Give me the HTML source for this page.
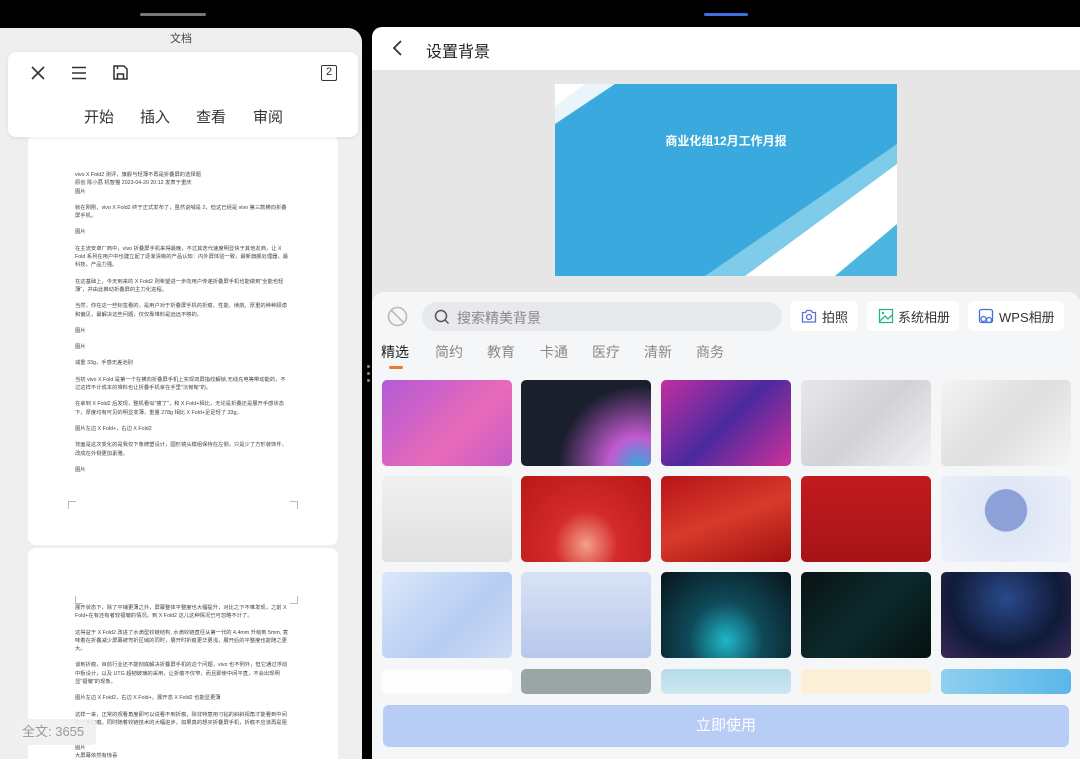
<!DOCTYPE html>
<html><head><meta charset="utf-8"><style>
*{margin:0;padding:0;box-sizing:border-box}
body{width:1080px;height:759px;overflow:hidden;background:#000;font-family:"Liberation Sans","Noto Sans CJK SC",sans-serif;position:relative}
.abs{position:absolute}
#left{left:0;top:28px;width:362px;height:731px;background:#efefef;border-top-right-radius:14px;overflow:hidden}
#right{left:372px;top:27px;width:708px;height:732px;background:#fff;border-top-left-radius:10px;overflow:hidden}
.page{background:#fff;border-radius:8px;position:absolute;left:28px;width:310px}
.txt{position:absolute;left:75px;width:215px;font-size:5.3px;line-height:8.3px;color:#444}
.txt p{margin-bottom:8px}
.corner{position:absolute;width:8px;height:8px;border-color:#bbb;border-style:solid;border-width:0}
.tab{position:absolute;top:315px;font-size:14px;color:#888}
.th{position:absolute;width:130px;height:86px;border-radius:5px;overflow:hidden}
</style></head><body>
<div class="abs" style="left:140px;top:13px;width:66px;height:3px;background:#777;border-radius:2px"></div>
<div class="abs" style="left:704px;top:13px;width:44px;height:3px;background:#3d6fe0;border-radius:2px"></div>
<div id="left" class="abs">
  <div class="abs" style="left:0;top:2px;width:362px;text-align:center;font-size:11px;color:#444">文档</div>
  <div class="page" style="top:107px;height:410px">
    <div class="corner" style="left:40px;top:366px;border-left-width:1px;border-top-width:1px"></div>
    <div class="corner" style="left:262px;top:366px;border-right-width:1px;border-top-width:1px"></div>
    <div class="txt" style="left:47px;top:36px">
    <p>vivo X Fold2 测评，旗舰与轻薄不再是折叠屏的选择题<br>原创 陈小荔 机智猫 2023-04-20 20:12 发表于重庆<br>图片</p>
    <p>就在刚刚，vivo X Fold2 终于正式发布了，虽然说喊是 2，但这已经是 vivo 第三款横向折叠屏手机。</p>
    <p>图片</p>
    <p>在主流安卓厂商中，vivo 折叠屏手机来得最晚，不过其迭代速度明显快于其他友商，让 X Fold 系列在用户中也建立起了逐渐清晰的产品认知：内外屏体验一致，最新旗舰处理器，最科技，产品力强。</p>
    <p>在这基础上，今天到来的 X Fold2 则希望进一步向用户传递折叠屏手机也能做到"全能也轻薄"，并由此推动折叠屏的主力化进程。</p>
    <p>当然，你在这一些标签看的，是用户对于折叠屏手机的折痕、性能、续航、厚重的种种顾虑和偏见，最解决这些问题，仅仅靠堆料是远远不够的。</p>
    <p>图片</p><p>图片</p>
    <p>减重 33g，手感无差池别</p>
    <p>当初 vivo X Fold 是第一个在横向折叠屏手机上实现双屏指纹解锁,无线充电等带动能的，不过这样不计成本的堆料也让折叠手机拿在手里"沉甸甸"的。</p>
    <p>在拿到 X Fold2 后发现，整机看似"瘦了"，和 X Fold+相比，无论是折叠还是展开手感状态下，厚度均有可见的明显变薄，重量 278g 相比 X Fold+足足轻了 33g。</p>
    <p>图片左边 X Fold+，右边 X Fold2</p>
    <p>背面是这次变化的是我仅下象牌塑设计，圆形镜头模组保持在左侧，只是少了方形装饰件，改成在外侧更加素雅。</p>
    <p>图片</p>
    </div>
  </div>
  <div class="page" style="top:520px;height:240px">
    <div class="corner" style="left:47px;top:48px;border-left-width:1px;border-bottom-width:1px"></div>
    <div class="corner" style="left:262px;top:48px;border-right-width:1px;border-bottom-width:1px"></div>
    <div class="txt" style="left:47px;top:56px">
    <p>展开状态下，除了平铺更薄之外，屏幕整体平整度也大幅提升，对比之下不难发现，之前 X Fold+在有还有者较褶皱的情况，到 X Fold2 这儿这种情况已可忽略不计了。</p>
    <p>这得益于 X Fold2 改进了水滴型铰链结构, 水滴铰链直径从第一代的 4.4mm 升级到 5mm, 意味着在折叠减少屏幕被弯折区域的同时，展开时折痕更华更浅，展开后的平整度也能随之更大。</p>
    <p>谈到折痕，目前行业还不能彻底解决折叠屏手机的这个问题，vivo 也不例外，但它通过浮动中板设计，以及 UTG 超韧玻璃的采用，让折痕不仅窄，而且即使中间平直，不会出现明显"褶皱"的现象。</p>
    <p>图片左边 X Fold2，右边 X Fold+，展开态 X Fold2 也能显更薄</p>
    <p>这样一来，正常的观看角度即可以说看不到折痕，除非特意用刁钻的斜斜视角才能看到中间有一条凹痕。同时随着铰链技术的大幅进步，如果真的想买折叠屏手机，折痕不应该再是阻碍。</p>
    <p>图片<br>大屏幕依然有惊喜</p>
    </div>
  </div>
  <div class="abs" style="left:8px;top:24px;width:350px;height:85px;background:#fff;border-radius:8px;box-shadow:0 1px 4px rgba(0,0,0,.08)">
    <svg class="abs" style="left:22px;top:13px" width="16" height="16" viewBox="0 0 16 16"><path d="M2 2L14 14M14 2L2 14" stroke="#333" stroke-width="1.6"/></svg>
    <svg class="abs" style="left:63px;top:14px" width="16" height="14" viewBox="0 0 16 14"><path d="M1 1.5H15M1 7H15M1 12.5H15" stroke="#333" stroke-width="1.5"/></svg>
    <svg class="abs" style="left:104px;top:12px" width="17" height="17" viewBox="0 0 17 17"><path d="M2 2H12L15 5V15H2Z M5.5 15V10H11.5V15 M5.5 2V5" fill="none" stroke="#333" stroke-width="1.5"/></svg>
    <div class="abs" style="left:313px;top:13px;width:16px;height:16px;border:1.5px solid #333;border-radius:2px;font-size:11px;line-height:13px;text-align:center;color:#333">2</div>
    <div class="abs" style="left:76px;top:54px;font-size:15px;color:#333">开始</div>
    <div class="abs" style="left:132px;top:54px;font-size:15px;color:#333">插入</div>
    <div class="abs" style="left:188px;top:54px;font-size:15px;color:#333">查看</div>
    <div class="abs" style="left:245px;top:54px;font-size:15px;color:#333">审阅</div>
  </div>
  <div class="abs" style="left:14px;top:691px;width:82px;height:26px;background:rgba(240,240,240,.9);border-radius:4px;font-size:13px;color:#999;line-height:26px;padding-left:8px">全文: 3655</div>
</div>
<div class="abs" style="left:367px;top:365px;width:3px;height:3px;background:#888;border-radius:50%"></div>
<div class="abs" style="left:367px;top:372px;width:3px;height:3px;background:#888;border-radius:50%"></div>
<div class="abs" style="left:367px;top:379px;width:3px;height:3px;background:#888;border-radius:50%"></div>
<div id="right" class="abs">
  <svg class="abs" style="left:20px;top:13px" width="12" height="16" viewBox="0 0 12 16"><path d="M9 1L2 8L9 15" fill="none" stroke="#333" stroke-width="1.8"/></svg>
  <div class="abs" style="left:54px;top:11px;font-size:16px;color:#222">设置背景</div>
  <div class="abs" style="left:0;top:43px;width:708px;height:230px;background:#e6e6e6"></div>
  <div class="abs" style="left:183px;top:57px;width:342px;height:192px;overflow:hidden;background:#3aa9dd">
    <svg width="342" height="192" viewBox="0 0 342 192" class="abs" style="left:0;top:0">
      <polygon points="0,0 60,0 0,40" fill="#e9f5fb"/>
      <polygon points="0,0 30,0 0,22" fill="#fff"/>
      <polygon points="342,60 342,192 150,192" fill="#7fcbea"/>
      <polygon points="342,80 342,192 190,192" fill="#fff"/>
      <polygon points="342,140 342,192 280,192" fill="#4cb5e0"/>
    </svg>
    <div class="abs" style="left:0;top:48px;width:342px;text-align:center;color:#fff;font-size:12px;font-weight:bold">商业化组12月工作月报</div>
  </div>
  <div class="abs" style="left:0;top:265px;width:708px;height:467px;background:#f5f6f8;border-top-left-radius:12px;border-top-right-radius:12px">
    <svg class="abs" style="left:15px;top:14px" width="21" height="21" viewBox="0 0 21 21"><circle cx="10.5" cy="10.5" r="9" fill="none" stroke="#bbb" stroke-width="1.6"/><path d="M4 4L17 17" stroke="#bbb" stroke-width="1.6"/></svg>
    <div class="abs" style="left:50px;top:10px;width:360px;height:29px;background:#e8e9ec;border-radius:15px">
      <svg class="abs" style="left:12px;top:7px" width="16" height="16" viewBox="0 0 16 16"><circle cx="7" cy="7" r="5.5" fill="none" stroke="#555" stroke-width="1.5"/><path d="M11 11L14.5 14.5" stroke="#555" stroke-width="1.5"/></svg>
      <div class="abs" style="left:35px;top:6px;font-size:14px;color:#888">搜索精美背景</div>
    </div>
    <div class="abs" style="left:418px;top:9px;width:68px;height:30px;background:#fff;border-radius:6px">
      <svg class="abs" style="left:11px;top:7px" width="16" height="16" viewBox="0 0 16 16"><path d="M1.5 4.5H4.5L6 2.5H10L11.5 4.5H14.5V14H1.5Z" fill="none" stroke="#5b6fd6" stroke-width="1.3"/><circle cx="8" cy="9" r="2.5" fill="none" stroke="#5b6fd6" stroke-width="1.3"/></svg>
      <div class="abs" style="left:32px;top:6px;font-size:13px;color:#333">拍照</div>
    </div>
    <div class="abs" style="left:495px;top:9px;width:92px;height:30px;background:#fff;border-radius:6px">
      <svg class="abs" style="left:11px;top:7px" width="16" height="16" viewBox="0 0 16 16"><rect x="1.5" y="1.5" width="13" height="13" fill="none" stroke="#26b58a" stroke-width="1.3"/><path d="M2 13L7 8L10 11L14 7" fill="none" stroke="#26b58a" stroke-width="1.3"/><circle cx="5" cy="5" r="1.2" fill="#26b58a"/></svg>
      <div class="abs" style="left:31px;top:6px;font-size:13px;color:#333">系统相册</div>
    </div>
    <div class="abs" style="left:596px;top:9px;width:96px;height:30px;background:#fff;border-radius:6px">
      <svg class="abs" style="left:10px;top:7px" width="17" height="17" viewBox="0 0 17 17"><rect x="1.5" y="1.5" width="13" height="13" rx="2" fill="none" stroke="#3d6fe0" stroke-width="1.3"/><circle cx="5.5" cy="11" r="2.5" fill="#fff" stroke="#3d6fe0" stroke-width="1.2"/><circle cx="11" cy="12" r="2.5" fill="#fff" stroke="#3d6fe0" stroke-width="1.2"/></svg>
      <div class="abs" style="left:31px;top:6px;font-size:13px;color:#333">WPS相册</div>
    </div>
  </div>
  <div class="tab" style="left:9px;color:#222">精选</div>
  <div class="abs" style="left:17px;top:339px;width:14px;height:3px;background:#f07a2a;border-radius:2px"></div>
  <div class="tab" style="left:63px">简约</div>
  <div class="tab" style="left:115px">教育</div>
  <div class="tab" style="left:168px">卡通</div>
  <div class="tab" style="left:220px">医疗</div>
  <div class="tab" style="left:272px">清新</div>
  <div class="tab" style="left:324px">商务</div>

  <div class="th" style="left:10px;top:353px;background:linear-gradient(135deg,#b35ad8,#e86ab8 60%,#c65cc8)"></div>
  <div class="th" style="left:149px;top:353px;background:radial-gradient(circle at 90% 100%,#3ad 0%,#c25ad0 20%,#1a1f2e 55%)"></div>
  <div class="th" style="left:289px;top:353px;background:linear-gradient(135deg,#c22fa0,#4a2aa0 50%,#d0309a)"></div>
  <div class="th" style="left:429px;top:353px;background:linear-gradient(135deg,#e8e8ea,#d2d2d6 50%,#f2f2f4)"></div>
  <div class="th" style="left:569px;top:353px;background:linear-gradient(135deg,#f4f4f4,#dedede 50%,#f6f6f6)"></div>

  <div class="th" style="left:10px;top:449px;background:linear-gradient(180deg,#f0f0f0,#e0e0e0)"></div>
  <div class="th" style="left:149px;top:449px;background:radial-gradient(ellipse at 50% 80%,#f3a08a 0%,#d42a2a 35%,#b81818)"></div>
  <div class="th" style="left:289px;top:449px;background:linear-gradient(160deg,#b8141a,#d83a2a 50%,#a01010)"></div>
  <div class="th" style="left:429px;top:449px;background:linear-gradient(180deg,#c21a1e,#a81418)"></div>
  <div class="th" style="left:569px;top:449px;background:radial-gradient(circle at 50% 40%,#8ea0d8 25%,#dfe6f6 26%,#eef1fa)"></div>

  <div class="th" style="left:10px;top:545px;background:linear-gradient(135deg,#dce8fb,#b6ccf2 60%,#cfdcf6)"></div>
  <div class="th" style="left:149px;top:545px;background:linear-gradient(180deg,#d8e2f6,#b8c8ec)"></div>
  <div class="th" style="left:289px;top:545px;background:radial-gradient(ellipse at 50% 80%,#1fb8c8 0%,#0f4a5a 40%,#081418)"></div>
  <div class="th" style="left:429px;top:545px;background:linear-gradient(135deg,#0a1214,#0c2a2c 50%,#061010)"></div>
  <div class="th" style="left:569px;top:545px;background:radial-gradient(ellipse at 50% 30%,#2a4a8a,#101a38 60%,#3a2a5a)"></div>

  <div class="th" style="left:10px;top:642px;height:25px;background:#fdfdfd"></div>
  <div class="th" style="left:149px;top:642px;height:25px;background:#9aa6a4"></div>
  <div class="th" style="left:289px;top:642px;height:25px;background:linear-gradient(180deg,#b4dcea,#cde8ef)"></div>
  <div class="th" style="left:429px;top:642px;height:25px;background:#fcefd8"></div>
  <div class="th" style="left:569px;top:642px;height:25px;background:linear-gradient(90deg,#8ed0ee,#5ab6ea)"></div>

  <div class="abs" style="left:0;top:667px;width:708px;height:65px;background:#f5f6f8"></div>
  <div class="abs" style="left:11px;top:678px;width:686px;height:42px;background:#b8cdf5;border-radius:6px;text-align:center;line-height:42px;color:#fff;font-size:15px">立即使用</div>
</div>
</body></html>
